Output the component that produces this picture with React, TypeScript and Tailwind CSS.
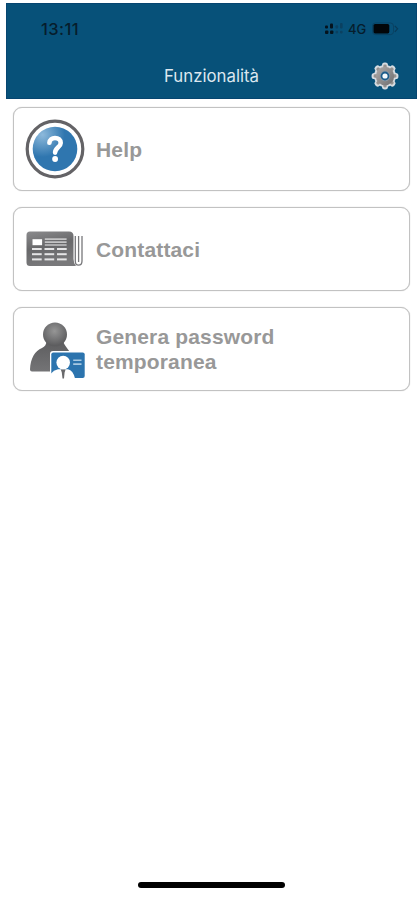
import type { ReactNode } from "react";

function GearIcon() {
  const teeth = [0, 45, 90, 135, 180, 225, 270, 315];
  return (
    <svg width="28" height="28" viewBox="0 0 28 28">
      <defs>
        <linearGradient id="gear" x1="0" y1="0" x2="1" y2="1">
          <stop offset="0" stopColor="#b0adab" />
          <stop offset="1" stopColor="#6e6d6f" />
        </linearGradient>
      </defs>
      <g fill="#d5dbe0">
        <circle cx="14" cy="14" r="11" />
        {teeth.map((a) => (
          <rect key={a} x="11" y="0.6" width="6" height="8" rx="2.6" transform={`rotate(${a} 14 14)`} />
        ))}
      </g>
      <g fill="#96928f">
        {teeth.map((a) => (
          <rect key={a} x="12.3" y="2.6" width="3.4" height="6" rx="1.4" transform={`rotate(${a} 14 14)`} />
        ))}
      </g>
      <circle cx="14" cy="14" r="9.2" fill="url(#gear)" />
      <circle cx="14" cy="14" r="5.2" fill="#8d9aa6" />
      <circle cx="14" cy="14" r="4.4" fill="#1c5c8a" />
      <circle cx="14" cy="14" r="2.6" fill="#f4f9fc" />
    </svg>
  );
}

function HelpIcon() {
  return (
    <svg width="60" height="60" viewBox="0 0 60 60">
      <defs>
        <radialGradient id="help" cx="0.22" cy="0.18" r="0.5">
          <stop offset="0" stopColor="#8db9db" />
          <stop offset="1" stopColor="#2f76af" />
        </radialGradient>
      </defs>
      <circle cx="30" cy="30" r="27.8" fill="#fff" stroke="#646366" strokeWidth="3.2" />
      <circle cx="30" cy="30" r="22.3" fill="url(#help)" />
      <path d="M24.4 23.8 C24.6 20.6 27 19 30 19 C33.4 19 35.7 21 35.7 23.9 C35.7 28.2 30.1 28.4 30.1 33.6" fill="none" stroke="#fff" strokeWidth="4.6" strokeLinecap="round" />
      <circle cx="30.1" cy="40" r="2.9" fill="#fff" />
    </svg>
  );
}

function NewsIcon() {
  const cols = [7, 19.5, 32];
  const rows = [19, 24.2, 29.4];
  return (
    <svg width="60" height="40" viewBox="0 0 60 40">
      <defs>
        <linearGradient id="news" x1="0" y1="0" x2="0.3" y2="1">
          <stop offset="0" stopColor="#8b8b8d" />
          <stop offset="0.5" stopColor="#68686a" />
          <stop offset="1" stopColor="#79797b" />
        </linearGradient>
      </defs>
      <path d="M5 2.5 H44 Q48.5 2.5 48.5 7 V30 Q48.5 34 51 37 H5 Q1.5 37 1.5 33.5 V6 Q1.5 2.5 5 2.5Z" fill="url(#news)" />
      <path d="M50.3 7 V32 Q50.3 36.2 53.4 36.2 Q57 36.2 57 32 V7 M53.6 7 V33" fill="none" stroke="#77777a" strokeWidth="1.3" />
      <rect x="7.5" y="10.2" width="9.6" height="6" fill="#fff" />
      <path d="M19.8 10.2 H41.6 M19.8 13.2 H41.6 M19.8 16 H41.6" stroke="#c4c4c5" strokeWidth="1.7" />
      <g fill="#e5e5e6">
        {rows.map((y) => cols.map((x) => <rect key={`${x}-${y}`} x={x} y={y} width="9.7" height="2" />))}
      </g>
    </svg>
  );
}

function UserCardIcon() {
  return (
    <svg width="60" height="60" viewBox="0 0 60 60">
      <defs>
        <radialGradient id="head" cx="0.48" cy="0.36" r="0.6">
          <stop offset="0" stopColor="#969696" />
          <stop offset="1" stopColor="#5d5d5f" />
        </radialGradient>
        <linearGradient id="body" x1="0" y1="0" x2="0" y2="1">
          <stop offset="0" stopColor="#5d5d5f" />
          <stop offset="1" stopColor="#747476" />
        </linearGradient>
      </defs>
      <path d="M21.5 22 H38.5 C38.5 28 47 31 48 42 V52.5 H7 Q5 52.5 5 50.5 C5.5 39 10 32 17 29 Q21.5 27 21.5 22Z" fill="url(#body)" />
      <circle cx="30" cy="15.5" r="12" fill="url(#head)" />
      <path d="M25 35 Q25 32 28 32 H57 Q60 32 60 34 V60 H36 L25 53Z" fill="#fff" />
      <rect x="26.3" y="33.4" width="33.4" height="25.6" rx="2" fill="#2c74ae" />
      <path d="M26 59.5 V54.5 Q28.5 51 33 50.2 H43 Q48 51 50 59.5Z" fill="#fff" />
      <circle cx="38.2" cy="43.6" r="6.8" fill="#fff" />
      <path d="M35.8 50.6 H40.6 L39.6 53.4 L39 59.4 H37.5 L36.8 53.4Z" fill="#69696b" />
      <path d="M48.2 41.2 H56.5 M48.2 45.1 H56.5" stroke="#a8c9e2" strokeWidth="1.6" />
    </svg>
  );
}

function StatusIcons() {
  return (
    <div className="flex items-center text-[#061d2c]">
      <svg width="21" height="14" viewBox="0 0 21 14">
        <g fill="#05131d">
          <rect x="1" y="8.4" width="3.4" height="3.6" rx="1" />
          <rect x="1" y="3.6" width="3" height="2.8" rx="1" />
          <rect x="6" y="8.4" width="3.4" height="3.6" rx="1" />
          <rect x="6" y="1.6" width="3" height="5" rx="1" />
        </g>
        <g fill="#0b4161">
          <rect x="11.5" y="3.2" width="2.6" height="3.2" rx="1" />
          <rect x="11.5" y="8.8" width="2.6" height="2.8" rx="1" />
          <rect x="16" y="1" width="2.6" height="5.6" rx="1" />
          <rect x="16" y="8.8" width="2.6" height="2.8" rx="1" />
        </g>
      </svg>
      <span className="ml-[3px] w-[19px] text-[13px] font-medium leading-[14px]">4G</span>
      <svg className="ml-[5px]" width="28" height="14" viewBox="0 0 28 14">
        <rect x="0.5" y="1" width="21" height="11.6" rx="3" fill="none" stroke="#094263" />
        <rect x="1.5" y="2" width="15.8" height="9.4" rx="1.6" fill="#020609" />
        <path d="M22.8 3.8 L25.6 6.8 L22.8 9.8" fill="none" stroke="#093a57" strokeWidth="1.2" />
      </svg>
    </div>
  );
}

function Card({ icon, children }: { icon: ReactNode; children: ReactNode }) {
  return (
    <div className="flex h-[84px] items-center rounded-[9px] border-[1.5px] border-[#c2c2c2] bg-white pl-[11px] shadow-[0_0_1px_#b8b8b8]">
      <div className="flex w-[60px] shrink-0 items-center">{icon}</div>
      <div className="ml-[11px] w-[210px] text-[21px] font-bold leading-[25px] tracking-[0.15px] text-[#989898]">{children}</div>
    </div>
  );
}

export default function App() {
  return (
    <div className="flex h-[900px] w-[418px] flex-col bg-white pt-[3px] font-['Liberation_Sans',sans-serif]">
      <header className="ml-[6px] mr-[1px] h-[96px] shrink-0 border border-[#064570] bg-[#075179] font-['Inter',sans-serif]">
        <div className="flex h-[50px] items-center justify-between pl-[34px] pr-[16px]">
          <span className="text-[16.5px] font-medium leading-5 tracking-[0.4px] text-[#061d2c]">13:11</span>
          <StatusIcons />
        </div>
        <div className="grid h-[43px] grid-cols-[1fr_auto_1fr] items-center">
          <span />
          <h1 className="text-[16.8px] leading-5 text-[#dce7ef]">Funzionalità</h1>
          <div className="flex justify-end pr-[17px]">
            <GearIcon />
          </div>
        </div>
      </header>
      <main className="ml-[13px] mr-[8px] mt-[8px] flex flex-col gap-4">
        <Card icon={<HelpIcon />}>Help</Card>
        <Card icon={<NewsIcon />}>Contattaci</Card>
        <Card icon={<UserCardIcon />}>Genera password temporanea</Card>
      </main>
      <div className="mb-[12px] ml-[138px] mt-auto h-[6px] w-[147px] rounded-full bg-black" />
    </div>
  );
}
